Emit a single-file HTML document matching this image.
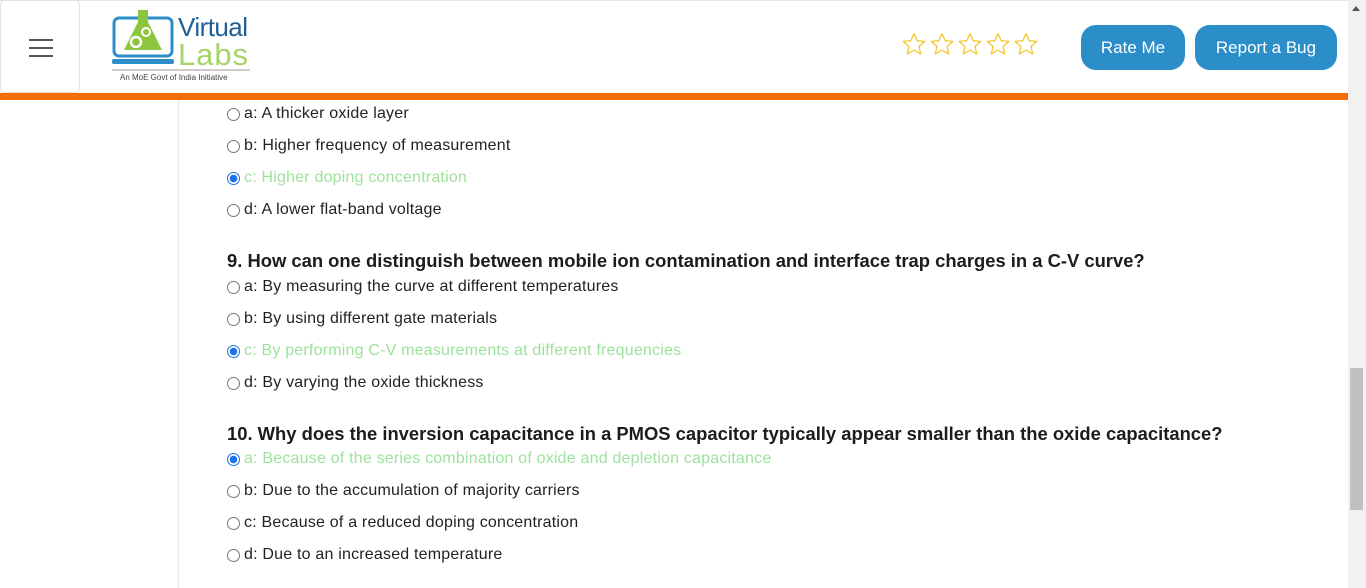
<!DOCTYPE html>
<html><head><meta charset="utf-8"><style>
*{margin:0;padding:0;box-sizing:border-box}
body{width:1366px;height:588px;overflow:hidden;background:#fff;font-family:"Liberation Sans",sans-serif;position:relative;color:#222}
.hdr{position:absolute;left:0;top:0;width:1348px;height:93px;background:#fff;border-top:1px solid #e6e6e6}
.menu{position:absolute;left:0;top:0;width:80px;height:93px;border:1px solid #e3e3e3;border-radius:4px;background:#fff}
.menu i{position:absolute;left:28px;width:24px;height:2px;background:#555}
.orange{position:absolute;left:0;top:93px;width:1348px;height:7px;background:#f56c08}
.side{position:absolute;left:178px;top:100px;width:1px;height:488px;background:#e8e8e8}
.btn{position:absolute;top:25px;height:45px;background:#2b8ec9;color:#fff;border-radius:15px;font-size:17px;display:flex;align-items:center;justify-content:center}
.sb{position:absolute;left:1348px;top:0;width:18px;height:588px;background:#f1f1f1}
.thumb{position:absolute;left:1350px;top:368px;width:13px;height:142px;background:#c1c1c1}
.opt{position:absolute;left:226px;font-size:16px;letter-spacing:0.2px;color:#222;display:flex;align-items:center;height:20px;white-space:nowrap}
.opt .r{width:13px;height:13px;border:1px solid #777;border-radius:50%;margin-right:4px;margin-left:1px;flex:none}
.opt.ok{color:#9de29b}
.opt.ok .r{border:1px solid #1a73e8;background:radial-gradient(circle,#1a73e8 3.5px,#fff 4px)}
.q{position:absolute;left:227px;font-size:18.4px;font-weight:bold;color:#1c1c1c;white-space:nowrap}
</style></head><body>
<div class="hdr"></div>
<div class="menu"><i style="top:38px"></i><i style="top:46px"></i><i style="top:54px"></i></div>
<svg style="position:absolute;left:108px;top:6px" width="150" height="80" viewBox="0 0 150 80">
<rect x="6" y="12" width="58" height="38" rx="5" fill="none" stroke="#2b8ec9" stroke-width="3"/>
<rect x="4" y="53" width="62" height="5" rx="2" fill="#2b8ec9"/>
<path d="M30 4h10v12l14 28h-38l14-28z" fill="#8cc63f"/>
<circle cx="28" cy="36" r="5" fill="none" stroke="#fff" stroke-width="2.5"/>
<circle cx="38" cy="26" r="4" fill="none" stroke="#fff" stroke-width="2"/>
<text x="70" y="30" font-family="Liberation Sans,sans-serif" font-size="26" fill="#1f5f96" textLength="70">Virtual</text>
<text x="70" y="59" font-family="Liberation Sans,sans-serif" font-size="31" fill="#a6d46a" textLength="70">Labs</text>
<line x1="4" y1="64" x2="142" y2="64" stroke="#999" stroke-width="1"/>
<text x="12" y="74" font-family="Liberation Sans,sans-serif" font-size="8" fill="#444">An MoE Govt of India Initiative</text>
</svg>
<svg style="position:absolute;left:902px;top:32px" width="140" height="26" viewBox="0 0 140 26">
<g fill="none" stroke="#f4c830" stroke-width="1.3" stroke-linejoin="round">
<path id="s" d="M12 1.5l3.1 7.2 7.8.7-5.9 5.1 1.8 7.6L12 18l-6.8 4.1 1.8-7.6L1.1 9.4l7.8-.7z"/>
<use href="#s" x="28"/><use href="#s" x="56"/><use href="#s" x="84"/><use href="#s" x="112"/>
</g></svg>
<div class="btn" style="left:1081px;width:104px">Rate Me</div>
<div class="btn" style="left:1195px;width:142px">Report a Bug</div>
<div class="orange"></div>
<div class="side"></div>
<div class="sb"></div><div style="position:absolute;left:1352px;top:6px;border:4px solid transparent;border-bottom:5px solid #555;border-top:0"></div>
<div class="thumb"></div>

<div class="opt" style="top:104px"><span class="r"></span>a: A thicker oxide layer</div>
<div class="opt" style="top:136px"><span class="r"></span>b: Higher frequency of measurement</div>
<div class="opt ok" style="top:168px"><span class="r"></span>c: Higher doping concentration</div>
<div class="opt" style="top:200px"><span class="r"></span>d: A lower flat-band voltage</div>

<div class="q" style="top:250px">9. How can one distinguish between mobile ion contamination and interface trap charges in a C-V curve?</div>
<div class="opt" style="top:277px"><span class="r"></span>a: By measuring the curve at different temperatures</div>
<div class="opt" style="top:309px"><span class="r"></span>b: By using different gate materials</div>
<div class="opt ok" style="top:341px"><span class="r"></span>c: By performing C-V measurements at different frequencies</div>
<div class="opt" style="top:373px"><span class="r"></span>d: By varying the oxide thickness</div>

<div class="q" style="top:423px">10. Why does the inversion capacitance in a PMOS capacitor typically appear smaller than the oxide capacitance?</div>
<div class="opt ok" style="top:449px"><span class="r"></span>a: Because of the series combination of oxide and depletion capacitance</div>
<div class="opt" style="top:481px"><span class="r"></span>b: Due to the accumulation of majority carriers</div>
<div class="opt" style="top:513px"><span class="r"></span>c: Because of a reduced doping concentration</div>
<div class="opt" style="top:545px"><span class="r"></span>d: Due to an increased temperature</div>
</body></html>
